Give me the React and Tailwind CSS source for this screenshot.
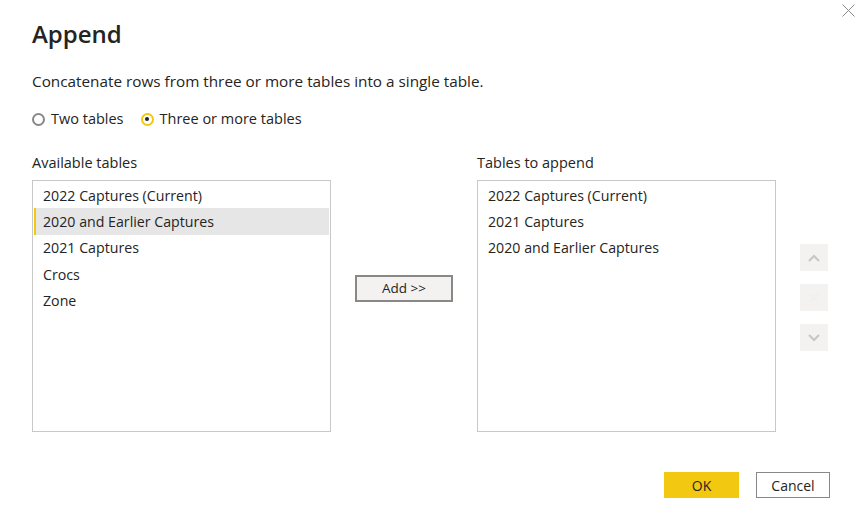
import React from 'react';

const font = { fontFamily: '"Segoe UI", "Open Sans", "Noto Sans", sans-serif' };

const available = ['2022 Captures (Current)', '2020 and Earlier Captures', '2021 Captures', 'Crocs', 'Zone'];
const toAppend = ['2022 Captures (Current)', '2021 Captures', '2020 and Earlier Captures'];

const ListBox = ({ items, selected }) => (
  <div className="w-[299px] h-[252px] border border-[#c8c8c8] bg-white p-px">
    {items.map((t, i) => (
      <div
        key={t}
        className={
          'h-[26.4px] flex items-center pl-[7px] text-[14.2px] text-[#252423] ' +
          (i === selected ? 'bg-[#e6e6e6] border-l-2 border-[#f2c811]' : 'border-l-2 border-transparent')
        }
      >
        {t}
      </div>
    ))}
  </div>
);

const Chevron = ({ up, color }) => (
  <svg width="12" height="8" viewBox="0 0 12 8">
    <path d={up ? 'M1 7 L6 2 L11 7' : 'M1 1 L6 6 L11 1'} fill="none" stroke={color} strokeWidth="2" />
  </svg>
);

export default function App() {
  return (
    <div className="relative w-[864px] h-[517px] bg-white text-[#252423]" style={font}>
      <button className="absolute top-[2px] right-[8px] w-[16px] h-[16px] flex items-center justify-center">
        <svg width="13" height="13" viewBox="0 0 13 13">
          <path d="M0.5 0.5 L12.5 12.5 M12.5 0.5 L0.5 12.5" stroke="#8a8886" strokeWidth="1" />
        </svg>
      </button>

      <div className="pl-[32px] pt-[16px]">
        <h1 className="text-[24px] font-semibold leading-[36px] text-[#252423]">Append</h1>

        <p className="mt-[19px] text-[15.3px] leading-[20px]">
          Concatenate rows from three or more tables into a single table.
        </p>

        <div className="mt-[18px] flex items-center gap-[17px] text-[14.5px] leading-[20px]">
          <label className="flex items-center gap-[6px]">
            <span className="w-[13px] h-[13px] rounded-full border-[2.5px] border-[#8a8886] bg-white" />
            Two tables
          </label>
          <label className="flex items-center gap-[6px]">
            <span className="w-[13px] h-[13px] rounded-full border-[2.5px] border-[#f2c811] bg-white flex items-center justify-center">
              <span className="w-[4px] h-[4px] rounded-full bg-[#252423]" />
            </span>
            Three or more tables
          </label>
        </div>

        <div className="mt-[24px] flex">
          <div className="flex flex-col">
            <div className="text-[14.5px] leading-[20px] mb-[7px]">Available tables</div>
            <ListBox items={available} selected={1} />
          </div>

          <div className="w-[146px] flex justify-center pt-[122px]">
            <button className="w-[98px] h-[27px] bg-[#f3f2f1] border-2 border-[#8a8886] text-[13.5px] text-[#252423]">
              Add &gt;&gt;
            </button>
          </div>

          <div className="flex flex-col">
            <div className="text-[14.5px] leading-[20px] mb-[7px]">Tables to append</div>
            <ListBox items={toAppend} selected={-1} />
          </div>

          <div className="ml-[24px] pt-[91px] flex flex-col gap-[13px]">
            <div className="w-[28px] h-[27px] bg-[#f3f2f1] flex items-center justify-center">
              <Chevron up color="#c8c6c4" />
            </div>
            <div className="w-[28px] h-[27px] bg-[#f3f2f1] flex items-center justify-center">
              <svg width="10" height="10" viewBox="0 0 10 10">
                <path d="M1 1 L9 9 M9 1 L1 9" stroke="#efeeed" strokeWidth="1.5" />
              </svg>
            </div>
            <div className="w-[28px] h-[27px] bg-[#f3f2f1] flex items-center justify-center">
              <Chevron color="#c8c6c4" />
            </div>
          </div>
        </div>

        <div className="mt-[40px] flex justify-end pr-[34px] gap-[17px]">
          <button className="w-[75px] h-[26px] bg-[#f2c811] text-[14px] text-[#252423]">OK</button>
          <button className="w-[74px] h-[26px] bg-white border border-[#8a8886] text-[14px] text-[#252423]">Cancel</button>
        </div>
      </div>
    </div>
  );
}
